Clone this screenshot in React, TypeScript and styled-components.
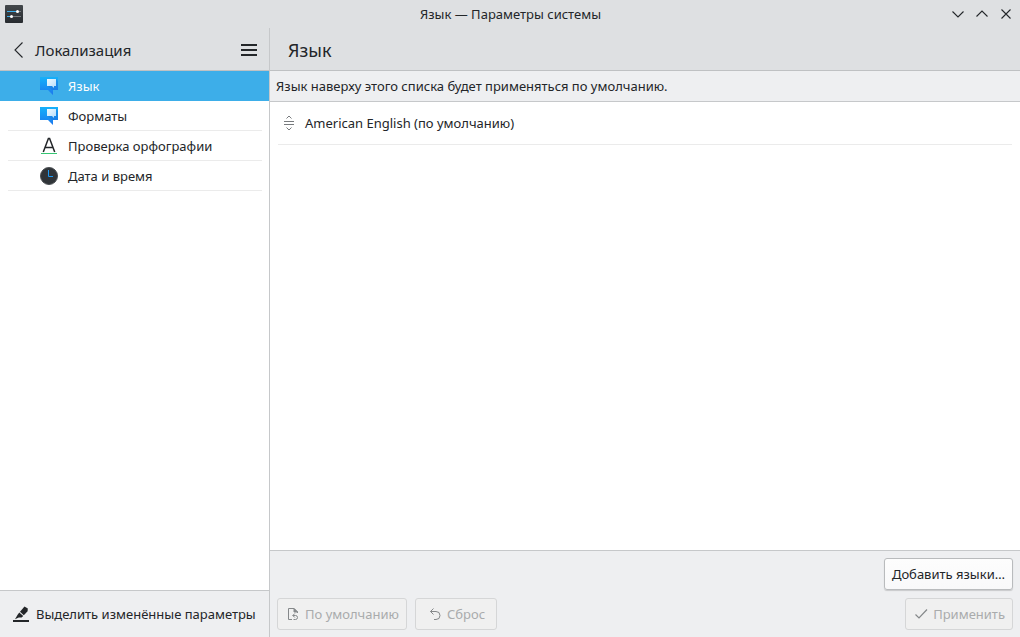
import React from "react";
import styled, { createGlobalStyle } from "styled-components";

const GlobalStyle = createGlobalStyle`
  * { box-sizing: border-box; }
  html, body { margin: 0; }
  body {
    background: #eeeff0;
    color: #232629;
    font: 13px/18px "Noto Sans", sans-serif;
  }
  button { font: inherit; color: inherit; margin: 0; }
  svg { display: block; flex: none; }
`;

const Window = styled.div`
  display: flex;
  flex-direction: column;
  min-height: 100vh;
  background: #eeeff1;
`;

const TitleBar = styled.header`
  display: grid;
  grid-template-columns: 1fr auto 1fr;
  align-items: center;
  height: 28px;
  padding: 0 4px 0 5px;
  background: #dee0e2;
`;

const WindowTitle = styled.span`
  white-space: nowrap;
`;

const WindowControls = styled.div`
  display: flex;
  gap: 4px;
  justify-content: flex-end;
`;

const IconButton = styled.button<{ $size: number }>`
  display: flex;
  align-items: center;
  justify-content: center;
  width: ${(p) => p.$size}px;
  height: ${(p) => p.$size}px;
  padding: 0;
  border: 0;
  background: none;
`;

const Columns = styled.div`
  display: flex;
  flex: 1;
`;

const Sidebar = styled.aside`
  display: flex;
  flex-direction: column;
  flex: none;
  width: 270px;
  border-right: 1px solid #c6c8ca;
`;

const Content = styled.main`
  display: flex;
  flex: 1;
  flex-direction: column;
  min-width: 0;
`;

const Header = styled.div<{ $inset: number }>`
  display: flex;
  align-items: center;
  height: 43px;
  padding: 2px 10px 0 ${(p) => p.$inset}px;
  border-bottom: 1px solid #bfc1c3;
  background: #dee0e2;
`;

const SidebarTitle = styled.h2`
  flex: 1;
  margin: 0 0 0 6px;
  font-size: 15px;
  line-height: 20px;
  font-weight: 400;
`;

const PageTitle = styled.h1`
  margin: 0;
  font-size: 18px;
  line-height: 24px;
  font-weight: 400;
`;

const Nav = styled.nav`
  flex: 1;
  background: #fff;
`;

const NavItem = styled.a<{ $active?: boolean }>`
  display: block;
  padding: 0 7px 0 8px;
  color: ${(p) => (p.$active ? "#fcfcfc" : "#232629")};
  background: ${(p) => (p.$active ? "#3daee9" : "transparent")};
  text-decoration: none;
`;

const NavRow = styled.span<{ $active?: boolean }>`
  display: flex;
  align-items: center;
  gap: 10px;
  height: 30px;
  padding-left: 32px;
  border-bottom: 1px solid ${(p) => (p.$active ? "transparent" : "#ebebeb")};
`;

const SidebarFooter = styled.div`
  height: 47px;
  border-top: 1px solid #c6c8ca;
  display: flex;
  align-items: center;
  padding-left: 13px;
`;

const FlatButton = styled.button`
  display: flex;
  align-items: center;
  gap: 7px;
  padding: 0;
  border: 0;
  background: none;
  white-space: nowrap;
`;

const Info = styled.p`
  min-height: 31px;
  margin: 0;
  padding: 6px;
  border-bottom: 1px solid #c6c8ca;
`;

const Languages = styled.ul`
  flex: 1;
  margin: 0;
  padding: 0 8px;
  list-style: none;
  background: #fff;
`;

const Language = styled.li`
  display: flex;
  align-items: center;
  gap: 8px;
  height: 43px;
  padding-left: 3px;
  border-bottom: 1px solid #ebebeb;
`;

const Footer = styled.footer`
  display: flex;
  flex-direction: column;
  gap: 8px;
  padding: 7px;
  border-top: 1px solid #c6c8ca;
`;

const Actions = styled.div`
  display: flex;
  gap: 8px;
`;

const Spacer = styled.span`
  flex: 1;
`;

const Button = styled.button<{ $pad: number }>`
  display: flex;
  align-items: center;
  gap: 4px;
  height: 32px;
  padding: 0 ${(p) => p.$pad}px;
  border: 1px solid #b9bbbd;
  border-radius: 3px;
  background: linear-gradient(#fdfdfd, #f9f9fa);
  box-shadow: 0 1px 1px rgba(0, 0, 0, 0.16);
  white-space: nowrap;

  &:disabled {
    border-color: #d5d6d7;
    background: #f0f0f0;
    box-shadow: none;
    color: #a9abac;
  }
`;

const AppIcon = () => (
  <svg width="18" height="18" viewBox="0 0 18 18">
    <defs>
      <linearGradient id="app" x2="0" y2="1">
        <stop stopColor="#43484c" />
        <stop offset="1" stopColor="#272b2f" />
      </linearGradient>
    </defs>
    <rect width="18" height="18" rx="1" fill="url(#app)" />
    <path d="M2 6.5h11M2 11.5h4" stroke="#3daee9" />
    <path d="M13 6.5h3M7 11.5h9" stroke="#777c80" />
    <circle cx="12.5" cy="6.5" r="1.5" fill="#fff" />
    <circle cx="6.5" cy="11.5" r="1.5" fill="#fff" />
  </svg>
);

const Line = ({ d, w = 16, h = 16 }: { d: string; w?: number; h?: number }) => (
  <svg width={w} height={h} viewBox={`0 0 ${w} ${h}`} fill="none" stroke="currentColor" strokeWidth="1.1">
    <path d={d} />
  </svg>
);

const MenuIcon = () => (
  <svg width="16" height="16" viewBox="0 0 16 16" fill="#232629">
    <path d="M0 2h16v2H0zM0 7h16v2H0zM0 12h16v2H0z" />
  </svg>
);

const SpeechIcon = () => (
  <svg width="18" height="18" viewBox="0 0 18 18">
    <defs>
      <linearGradient id="speech-back" x2="0" y2="1">
        <stop stopColor="#16b1fa" />
        <stop offset="1" stopColor="#1c78ee" />
      </linearGradient>
      <linearGradient id="speech-front" x2="1" y2="1">
        <stop stopColor="#f2faff" />
        <stop offset="1" stopColor="#b4dcfb" />
      </linearGradient>
    </defs>
    <path d="M0 0h18v13h-5v5l-5-5H0z" fill="url(#speech-back)" />
    <path d="M7 8l5 5h6V4l-2-2v7z" fill="#1668cf" opacity=".3" />
    <path d="M7 2h9v7h-2v2l-2-2H7z" fill="url(#speech-front)" />
  </svg>
);

const SpellIcon = () => (
  <svg width="18" height="18" viewBox="0 0 18 18" fill="none">
    <path d="M3.3 15 8.4 1.6h1.2L14.7 15M5.2 10.5h7.6" stroke="#232629" strokeWidth="1.5" />
    <path d="M1 16.5h16" stroke="#35c673" />
  </svg>
);

const ClockIcon = () => (
  <svg width="18" height="18" viewBox="0 0 18 18" fill="none">
    <circle cx="9" cy="9" r="8.5" fill="#303438" stroke="#4b4f53" />
    <path d="M8.5 3v6.5H13" stroke="#1d99f3" />
  </svg>
);

const HighlightIcon = () => (
  <svg width="16" height="16" viewBox="0 0 16 16" fill="#232629">
    <path d="M0 14h16v2H0z" />
    <path d="M11.5 0.5 14.8 2.5 14.6 5.2 10.8 9.2 7 5.8z" />
    <path d="M6.3 6.4 10.2 9.9 8.6 11.6 5.8 11.4 2 13.2 4.6 8.7z" />
  </svg>
);

const DragIcon = () => (
  <svg width="16" height="16" viewBox="0 0 16 16" fill="none" stroke="#777a7d">
    <path d="M3 6.5h10M3 9.5h10M5.5 3.5 8 1l2.5 2.5M5.5 12.5 8 15l2.5-2.5" />
  </svg>
);

const DefaultsIcon = () => (
  <svg width="16" height="16" viewBox="0 0 16 16" fill="none" stroke="#85888a">
    <path d="M7 13.5H3.5v-11H9L12.5 6v1" />
    <path d="M9 2.5V6h3.5z" fill="#85888a" />
    <path d="M9.8 7.5 7.8 9.5l2 2M7.8 9.5h2.7a2 2 0 0 1 0 4H8.5" />
  </svg>
);

const ResetIcon = () => (
  <svg width="16" height="16" viewBox="0 0 16 16" fill="none" stroke="#85888a">
    <path d="M6.5 2.5l-3 3 3 3M3.5 5.5H9a4 4 0 0 1 0 8H7" />
  </svg>
);

const CheckIcon = () => (
  <svg width="16" height="16" viewBox="0 0 16 16" fill="none" stroke="#85888a" strokeWidth="1.2">
    <path d="M2.5 8.5 6 12l8-8.5" />
  </svg>
);

const sections = [
  { label: "Язык", Icon: SpeechIcon, active: true },
  { label: "Форматы", Icon: SpeechIcon },
  { label: "Проверка орфографии", Icon: SpellIcon },
  { label: "Дата и время", Icon: ClockIcon },
];

export default function App() {
  return (
    <Window>
      <GlobalStyle />
      <TitleBar>
        <AppIcon />
        <WindowTitle>Язык — Параметры системы</WindowTitle>
        <WindowControls>
          <IconButton $size={20} aria-label="Свернуть"><Line d="M2.5 5.5 8 11l5.5-5.5" /></IconButton>
          <IconButton $size={20} aria-label="Развернуть"><Line d="M2.5 10.5 8 5l5.5 5.5" /></IconButton>
          <IconButton $size={20} aria-label="Закрыть"><Line d="M3.5 3.5l9 9M12.5 3.5l-9 9" /></IconButton>
        </WindowControls>
      </TitleBar>
      <Columns>
        <Sidebar>
          <Header $inset={7}>
            <IconButton $size={22} aria-label="Назад"><Line w={22} h={22} d="M15.5 3.5 8 11l7.5 7.5" /></IconButton>
            <SidebarTitle>Локализация</SidebarTitle>
            <IconButton $size={20} aria-label="Меню"><MenuIcon /></IconButton>
          </Header>
          <Nav>
            {sections.map(({ label, Icon, active }) => (
              <NavItem key={label} href="#" $active={active}>
                <NavRow $active={active}><Icon />{label}</NavRow>
              </NavItem>
            ))}
          </Nav>
          <SidebarFooter>
            <FlatButton><HighlightIcon />Выделить изменённые параметры</FlatButton>
          </SidebarFooter>
        </Sidebar>
        <Content>
          <Header $inset={18}><PageTitle>Язык</PageTitle></Header>
          <Info>Язык наверху этого списка будет применяться по умолчанию.</Info>
          <Languages>
            <Language><DragIcon />American English (по умолчанию)</Language>
          </Languages>
          <Footer>
            <Actions>
              <Spacer />
              <Button $pad={7}>Добавить языки…</Button>
            </Actions>
            <Actions>
              <Button $pad={7} disabled><DefaultsIcon />По умолчанию</Button>
              <Button $pad={11} disabled><ResetIcon />Сброс</Button>
              <Spacer />
              <Button $pad={7} disabled><CheckIcon />Применить</Button>
            </Actions>
          </Footer>
        </Content>
      </Columns>
    </Window>
  );
}
